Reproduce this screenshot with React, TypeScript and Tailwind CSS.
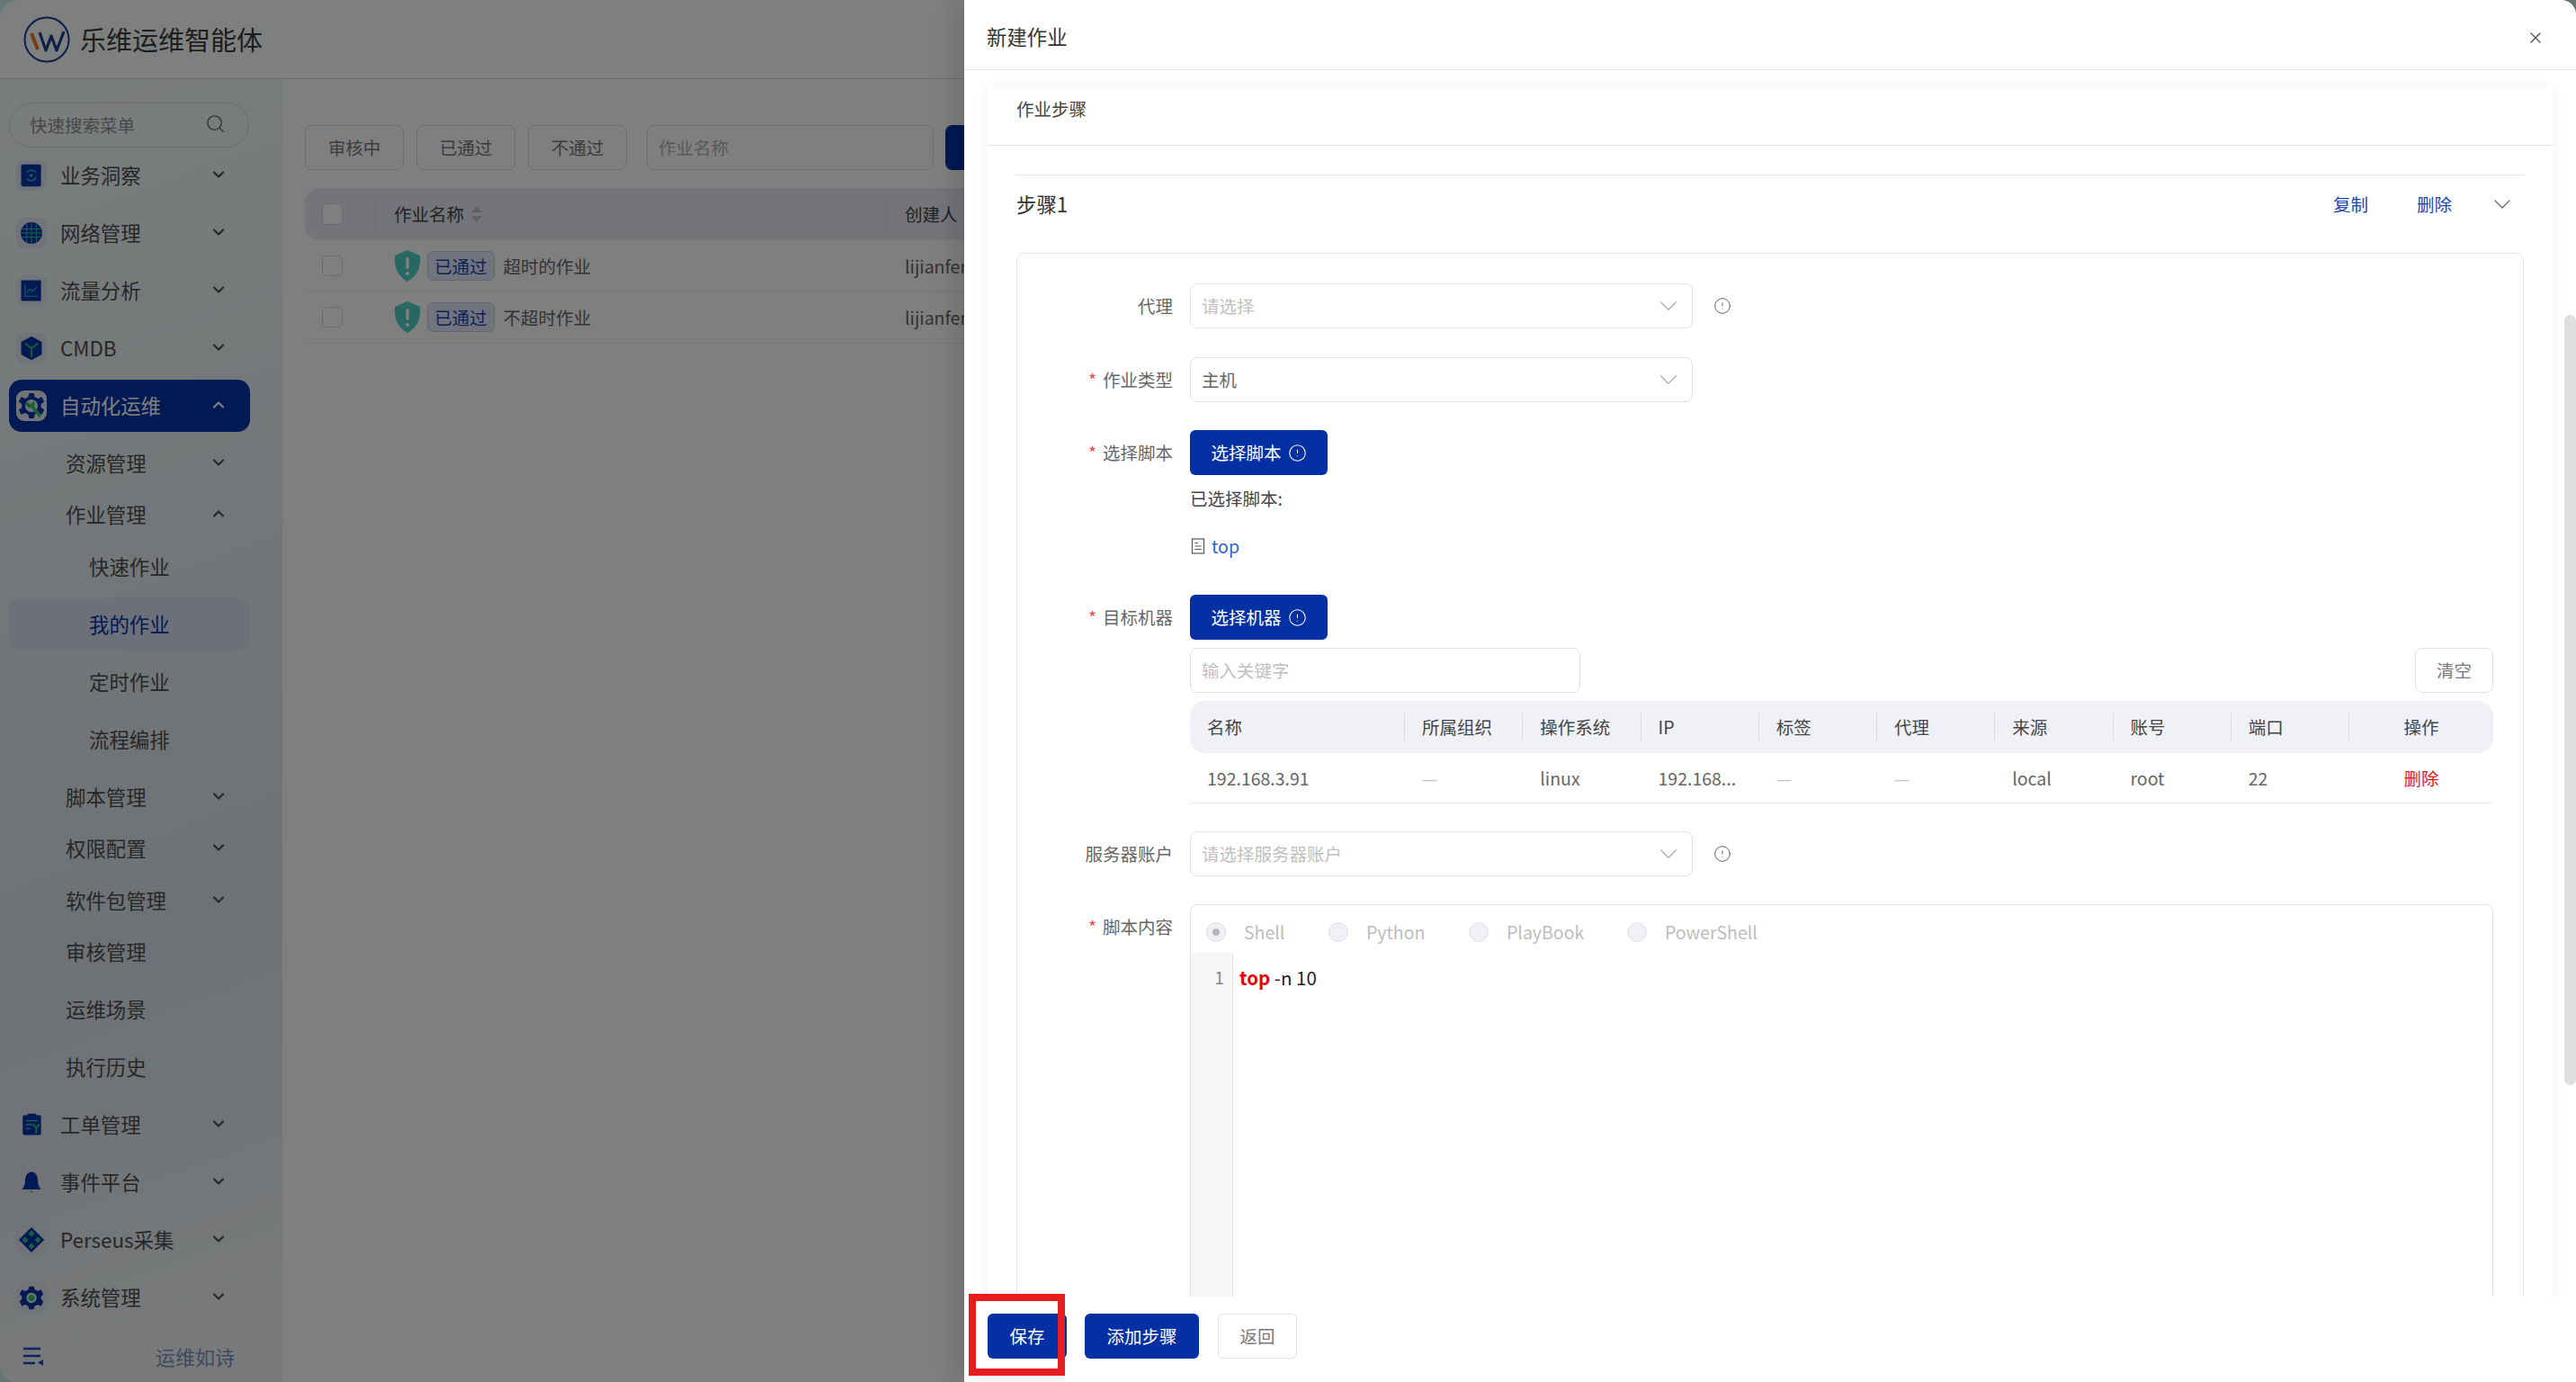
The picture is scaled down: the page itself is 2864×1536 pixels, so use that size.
import { ChevronDown, ChevronUp, CircleAlert, Search, X } from 'lucide-react';

const font = { fontFamily: '"Noto Sans CJK SC", "Noto Sans", sans-serif' };

function Logo() {
  return (
    <svg width="52" height="52" viewBox="0 0 52 52" fill="none">
      <circle cx="26" cy="26" r="24.5" stroke="#1c3f94" strokeWidth="2" />
      <path d="M9 19L16 37" stroke="#e8792a" strokeWidth="4" />
      <path d="M18 18L25 38L31 22L37 38L45 17" stroke="#1c3f94" strokeWidth="3.2" fill="none" strokeLinejoin="round" />
    </svg>
  );
}

const navy = '#0334a8';
const green = '#2fc26a';

function MenuIcon({ name }: { name: string }) {
  const g = (() => {
    switch (name) {
      case 'insight':
        return (
          <>
            <rect x="4" y="3" width="25" height="28" rx="2" fill={navy} />
            <path d="M11 13 A7 7 0 0 1 22 13 M23 19 A7 7 0 0 1 11 21" stroke="#35c0b5" strokeWidth="1.6" fill="none" />
            <circle cx="16.5" cy="17" r="2" fill="#35c0b5" />
          </>
        );
      case 'globe':
        return (
          <>
            <circle cx="17" cy="17" r="13.5" fill={navy} />
            <path d="M3.5 12H30.5M3.5 17H30.5M3.5 22H30.5M11 5V29M17 3.5V30.5M23 5V29" stroke="#2fc2a0" strokeWidth="1.2" />
          </>
        );
      case 'chart':
        return (
          <>
            <rect x="4" y="4" width="25" height="26" rx="1" fill={navy} />
            <path d="M9 9V24H25" stroke="#35c0b5" strokeWidth="1.2" fill="none" />
            <path d="M11 20L15 15L18 18L24 12" stroke="#35c0b5" strokeWidth="1.2" fill="none" />
          </>
        );
      case 'box':
        return (
          <>
            <path d="M17 2L30 9V25L17 32L4 25V9Z" fill={navy} />
            <path d="M9 11L17 17L25 11M17 17V28" stroke={green} strokeWidth="2" fill="none" />
          </>
        );
      case 'gear':
        return (
          <>
            <path d="M14 1H20L21 6L25 8L30 6L33 12L29 15V19L33 22L30 28L25 26L21 28L20 33H14L13 28L9 26L4 28L1 22L5 19V15L1 12L4 6L9 8L13 6Z" fill={navy} />
            <circle cx="17" cy="17" r="8" fill="#dfe4ee" />
            <path d="M18 18L27 29" stroke={green} strokeWidth="4" strokeLinecap="round" />
            <path d="M11 11A5.5 5.5 0 1 0 20 11L16 15L13 13Z" fill={green} />
          </>
        );
      case 'ticket':
        return (
          <>
            <rect x="6" y="5" width="23" height="25" rx="2" fill={navy} />
            <rect x="12" y="3" width="11" height="4" rx="1" fill={navy} />
            <path d="M10 12H25M10 17H18M10 22H16" stroke="#2fc2a0" strokeWidth="1.5" />
            <path d="M20 16V18L23 21V28M26 16V18L23 21" stroke={green} strokeWidth="2.2" fill="none" />
          </>
        );
      case 'bell':
        return (
          <>
            <path d="M17 4C11 4 9 10 9 15C9 20 7 24 5 26H29C27 24 25 20 25 15C25 10 23 4 17 4Z" fill={navy} />
            <path d="M15 28H19L17 31Z" fill={green} />
          </>
        );
      case 'diamond':
        return (
          <>
            <path d="M17 1L33 17L17 33L1 17Z" fill={navy} />
            <path d="M17 5L21 9L17 13L13 9Z M9 13L13 17L9 21L5 17Z M25 13L29 17L25 21L21 17Z M17 21L21 25L17 29L13 25Z" fill="#2fc28a" />
          </>
        );
      default:
        return (
          <>
            <path d="M14 3H20L21 7L25 9L29 7L32 13L29 16V19L32 22L29 28L25 26L21 28L20 32H14L13 28L9 26L5 28L2 22L5 19V16L2 13L5 7L9 9L13 7Z" fill={navy} />
            <circle cx="17" cy="17.5" r="6.5" fill="#e2e6ef" />
            <circle cx="17" cy="17.5" r="4" fill={green} />
          </>
        );
    }
  })();
  return (
    <span className="flex h-[34px] w-[34px] shrink-0 items-center justify-center rounded-[9px] bg-[#e2e6f0]">
      <svg width="30" height="30" viewBox="0 0 34 34">{g}</svg>
    </span>
  );
}

type Item = { label: string; icon?: string; level: 0 | 1 | 2; arrow?: 'up' | 'down'; tight?: boolean; active?: boolean; current?: boolean };

const menu: Item[] = [
  { label: '业务洞察', icon: 'insight', level: 0, arrow: 'down' },
  { label: '网络管理', icon: 'globe', level: 0, arrow: 'down' },
  { label: '流量分析', icon: 'chart', level: 0, arrow: 'down' },
  { label: 'CMDB', icon: 'box', level: 0, arrow: 'down' },
  { label: '自动化运维', icon: 'gear', level: 0, arrow: 'up', active: true },
  { label: '资源管理', level: 1, arrow: 'down' },
  { label: '作业管理', level: 1, arrow: 'up', tight: true },
  { label: '快速作业', level: 2, tight: true },
  { label: '我的作业', level: 2, current: true },
  { label: '定时作业', level: 2 },
  { label: '流程编排', level: 2 },
  { label: '脚本管理', level: 1, arrow: 'down' },
  { label: '权限配置', level: 1, arrow: 'down', tight: true },
  { label: '软件包管理', level: 1, arrow: 'down', tight: true },
  { label: '审核管理', level: 1, tight: true },
  { label: '运维场景', level: 1 },
  { label: '执行历史', level: 1 },
  { label: '工单管理', icon: 'ticket', level: 0, arrow: 'down' },
  { label: '事件平台', icon: 'bell', level: 0, arrow: 'down' },
  { label: 'Perseus采集', icon: 'diamond', level: 0, arrow: 'down' },
  { label: '系统管理', icon: 'cog', level: 0, arrow: 'down' },
];

function MenuRow({ item, first }: { item: Item; first: boolean }) {
  return (
    <div
      className={`flex h-[57.5px] items-center rounded-[14px] text-[22.4px] ${first || item.tight ? '' : 'mt-[6.5px]'} ${
        item.active ? 'bg-[#0334a8] text-white' : item.current ? 'bg-[#d9e1f3] text-[#0334a8]' : 'text-[#4d4f50]'
      } ${item.level === 0 ? 'pl-[8px]' : item.level === 1 ? 'pl-[63px]' : 'pl-[89px]'}`}
    >
      {item.icon && <MenuIcon name={item.icon} />}
      <span className={item.icon ? 'ml-[15px]' : ''}>{item.label}</span>
      {item.arrow === 'down' && <ChevronDown size={20} strokeWidth={2.6} className="ml-auto mr-[25px] -translate-y-[1px]" />}
      {item.arrow === 'up' && <ChevronUp size={20} strokeWidth={2.6} className="ml-auto mr-[25px] -translate-y-[1px]" />}
    </div>
  );
}

function Sidebar() {
  return (
    <aside className="flex h-full w-[314px] shrink-0 flex-col bg-[linear-gradient(160deg,#f6fbfb_0%,#e6edf1_40%,#dce4ec_66%,#f3f6f7_100%)]">
      <div className="ml-[10px] mt-[26px] flex h-[50px] w-[267px] items-center rounded-full border border-[#d4d8da] pl-[22px] pr-[25px] text-[19.5px] text-[#8c9092]">
        <span>快速搜索菜单</span>
        <Search size={23} strokeWidth={1.5} className="ml-auto -translate-y-[2px] text-[#6b6f72]" />
      </div>
      <nav className="ml-[10px] mt-[2px] w-[268px]">
        {menu.map((item, i) => (
          <MenuRow key={item.label} item={item} first={i === 0} />
        ))}
      </nav>
      <div className="mt-auto flex h-[58px] items-center pl-[26px]">
        <svg width="22" height="21" viewBox="0 0 22 21" fill="none">
          <path d="M0 2H19M0 10H19M0 18H13" stroke="#1c4bb8" strokeWidth="2.4" />
          <path d="M22 14V21L16 17.5Z" fill="#1c4bb8" />
        </svg>
        <span className="ml-[125px] text-[22px] text-[#7d93c4]">运维如诗</span>
      </div>
    </aside>
  );
}

function Shield() {
  return (
    <svg width="30" height="35" viewBox="0 0 30 35">
      <path d="M15 0L29 6C30 18 27 28 15 35C3 28 0 18 1 6Z" fill="#4fd0c4" />
      <rect x="13.3" y="8" width="3.4" height="13" rx="1.7" fill="#fff" />
      <circle cx="15" cy="26" r="2.1" fill="#fff" />
    </svg>
  );
}

function JobRow({ name }: { name: string }) {
  return (
    <div className="flex h-[57.5px] items-center border-b border-[#ececec]">
      <div className="flex w-[99px] shrink-0 pl-[19px]">
        <span className="h-[23px] w-[23px] rounded-[5px] border border-[#d9d9d9] bg-white" />
      </div>
      <div className="flex w-[568px] shrink-0 items-center text-[19.5px] text-[#666]">
        <Shield />
        <span className="ml-[7px] rounded-[6px] border border-[#c3cef0] bg-[#e3e8fa] px-[7px] py-[1px] text-[#1a46b0]">已通过</span>
        <span className="ml-[10px]">{name}</span>
      </div>
      <span className="text-[19.5px] text-[#666]">lijianfeng</span>
    </div>
  );
}

function MainPanel() {
  return (
    <main className="ml-0 mt-[25px] h-[1395px] flex-1 rounded-[28px] bg-white pl-[25px] pt-[26px]">
      <div className="flex items-center text-[19.5px] text-[#777]">
        {['审核中', '已通过', '不通过'].map((t) => (
          <span key={t} className="mr-[14px] flex h-[50px] w-[110px] items-center justify-center rounded-[8px] border border-[#dcdcdc]">
            {t}
          </span>
        ))}
        <span className="ml-[8px] flex h-[50px] w-[319px] items-center rounded-[8px] border border-[#dcdcdc] pl-[12px] text-[#b3b3b3]">作业名称</span>
        <span className="ml-[13px] h-[50px] w-[120px] rounded-[8px] bg-[#0334a8]" />
      </div>
      <div className="mt-[20px] flex h-[58px] items-center rounded-[16px] bg-[#e6eaf6] text-[19.5px] text-[#444]">
        <div className="flex w-[79px] shrink-0 items-center justify-between">
          <span className="ml-[19px] h-[24px] w-[23px] rounded-[5px] border border-[#d9d9d9] bg-white" />
          <span className="h-[32px] w-px bg-[#d5d9e4]" />
        </div>
        <div className="flex w-[568px] shrink-0 items-center justify-between">
          <span className="ml-[20px] flex items-center">
            作业名称
            <svg className="ml-[8px]" width="12" height="20" viewBox="0 0 12 20">
              <path d="M6 1L12 8H0Z M6 19L0 12H12Z" fill="#c2c2c2" />
            </svg>
          </span>
          <span className="h-[32px] w-px bg-[#d5d9e4]" />
        </div>
        <span className="ml-[20px]">创建人</span>
      </div>
      <JobRow name="超时的作业" />
      <JobRow name="不超时作业" />
    </main>
  );
}

function Field({ label, required, className, children }: { label: string; required?: boolean; className?: string; children: React.ReactNode }) {
  return (
    <div className={`flex items-start ${className ?? ''}`}>
      <div className="flex h-[50px] w-[173px] shrink-0 items-center justify-end text-[19.5px] text-[#666]">
        {required && <span className="mr-[7px] text-[#ef4d4d]">*</span>}
        {label}
      </div>
      <div className="ml-[19px] min-w-0 flex-1">{children}</div>
    </div>
  );
}

function SelectBox({ text, placeholder }: { text: string; placeholder?: boolean }) {
  return (
    <div className="flex items-center">
      <div className={`flex h-[50px] w-[559px] items-center rounded-[8px] border border-[#e1e1e1] pl-[12px] pr-[9px] text-[19.5px] ${placeholder ? 'text-[#bfbfbf]' : 'text-[#666]'}`}>
        {text}
        <ChevronDown size={34} strokeWidth={0.8} className="ml-auto text-[#a9a9a9]" />
      </div>
    </div>
  );
}

function Tip() {
  return <CircleAlert size={20} strokeWidth={1.2} className="ml-[23px] text-[#666]" />;
}

function PrimaryButton({ text }: { text: string }) {
  return (
    <button className="flex h-[50px] w-[153px] items-center justify-center rounded-[6px] bg-[#0330a3] text-[19.5px] text-white">
      {text}
      <CircleAlert size={21} strokeWidth={1.2} className="ml-[7px]" />
    </button>
  );
}

const hostCols = [
  { head: '名称', cell: '192.168.3.91' },
  { head: '所属组织', cell: '—' },
  { head: '操作系统', cell: 'linux' },
  { head: 'IP', cell: '192.168...' },
  { head: '标签', cell: '—' },
  { head: '代理', cell: '—' },
  { head: '来源', cell: 'local' },
  { head: '账号', cell: 'root' },
  { head: '端口', cell: '22' },
];

function HostTable() {
  return (
    <div className="mt-[9px] text-[19.5px]">
      <div className="grid h-[58px] grid-cols-[239px_repeat(8,131.25px)_1fr] items-center rounded-[16px] bg-[#f0f1f7] text-[#444]">
        {hostCols.map((c) => (
          <div key={c.head} className="flex h-[30px] items-center border-r border-[#d9dbe1] pl-[19px]">
            {c.head}
          </div>
        ))}
        <div className="text-center">操作</div>
      </div>
      <div className="grid h-[56px] grid-cols-[239px_repeat(8,131.25px)_1fr] items-center border-b border-[#ececec] text-[#666]">
        {hostCols.map((c) => (
          <div key={c.head} className={`pl-[19px] ${c.cell === '—' ? 'text-[#c4c4c4]' : ''}`}>
            {c.cell}
          </div>
        ))}
        <div className="text-center text-[#e8141c]">删除</div>
      </div>
    </div>
  );
}

const radios = [
  { label: 'Shell', w: 'w-[136px]' },
  { label: 'Python', w: 'w-[156px]' },
  { label: 'PlayBook', w: 'w-[176px]' },
  { label: 'PowerShell', w: 'w-[180px]' },
];

function Editor() {
  return (
    <div className="h-[500px] rounded-t-[8px] border border-[#e1e1e1]">
      <div className="flex h-[53px] items-center pl-[17px] pt-[6px] text-[19.5px] text-[#bdbdbd]">
        {radios.map((r, i) => (
          <span key={r.label} className={`flex items-center ${r.w}`}>
            <span className="flex h-[22px] w-[22px] items-center justify-center rounded-full border border-[#dfe1e8] bg-[#f0f1f6]">
              {i === 0 && <span className="h-[8px] w-[8px] rounded-full bg-[#b5b7bc]" />}
            </span>
            <span className="ml-[20px]">{r.label}</span>
          </span>
        ))}
      </div>
      <div className="flex h-[444px] text-[19.5px]">
        <div className="w-[47px] shrink-0 border-r border-[#e1e1e1] bg-[#f6f6f6] pr-[9px] pt-[12px] text-right leading-[30px] text-[#888]">1</div>
        <div className="pl-[7px] pt-[12px] text-[20.5px] leading-[30px] text-[#222]">
          <span className="font-bold text-[#e8000d]">top</span> -n 10
        </div>
      </div>
    </div>
  );
}

function StepForm() {
  return (
    <div className="mt-[23px] h-[1200px] rounded-t-[8px] border border-[#e4e4e4] pr-[33px] pt-[33px]">
      <Field label="代理">
        <div className="flex items-center">
          <SelectBox text="请选择" placeholder />
          <Tip />
        </div>
      </Field>
      <Field label="作业类型" required className="mt-[32px]">
        <SelectBox text="主机" />
      </Field>
      <Field label="选择脚本" required className="mt-[31px]">
        <PrimaryButton text="选择脚本" />
        <div className="mt-[11px] text-[19.5px] leading-[30px] text-[#444]">已选择脚本:</div>
        <div className="mt-[23px] flex items-center text-[19.5px] leading-[30px] text-[#2e62d9]">
          <svg width="16" height="18" viewBox="0 0 16 18" fill="none" className="ml-[1px]">
            <rect x="1.5" y="1" width="13" height="16" stroke="#555" strokeWidth="1.2" />
            <path d="M4.5 5.5H8M4.5 9H11.5M4.5 12.5H11.5" stroke="#555" strokeWidth="1.2" />
          </svg>
          <span className="ml-[7px]">top</span>
        </div>
      </Field>
      <Field label="目标机器" required className="mt-[39px]">
        <PrimaryButton text="选择机器" />
        <div className="mt-[9px] flex justify-between text-[19.5px]">
          <div className="flex h-[50px] w-[434px] items-center rounded-[8px] border border-[#e1e1e1] pl-[12px] text-[#bfbfbf]">输入关键字</div>
          <div className="flex h-[50px] w-[87px] items-center justify-center rounded-[8px] border border-[#e1e1e1] text-[#777]">清空</div>
        </div>
        <HostTable />
      </Field>
      <Field label="服务器账户" className="mt-[31px]">
        <div className="flex items-center">
          <SelectBox text="请选择服务器账户" placeholder />
          <Tip />
        </div>
      </Field>
      <Field label="脚本内容" required className="mt-[31px]">
        <Editor />
      </Field>
    </div>
  );
}

function Drawer() {
  return (
    <div className="absolute inset-y-0 left-[1072px] right-0 flex flex-col rounded-tr-[16px] bg-white shadow-[-12px_0_24px_rgba(0,0,0,0.12)]">
      <div className="flex h-[78px] shrink-0 items-center justify-between border-b border-[#e6e6e6] pl-[25px] pr-[35px] text-[22.4px] text-[#333]">
        <span className="translate-y-[2px]">新建作业</span>
        <X size={20} strokeWidth={1.6} className="translate-y-[3px] text-[#555]" />
      </div>
      <div className="relative min-h-0 flex-1 overflow-hidden pl-[26px] pr-[26px] pt-[19px]">
        <div className="h-[1400px] bg-white shadow-[0_0_14px_rgba(40,60,110,0.08)]">
          <div className="h-[65px] border-b border-[#e4e4e4] pl-[32px] pt-[8px] text-[19.5px] leading-[32px] text-[#444]">作业步骤</div>
          <div className="px-[32px]">
            <div className="mt-[32px] flex h-[64px] items-center border-t border-[#e4e4e4] text-[19.5px]">
              <span className="text-[22.4px] text-[#333]">步骤1</span>
              <span className="ml-auto text-[#1a46b0]">复制</span>
              <span className="ml-[54px] text-[#1a46b0]">删除</span>
              <ChevronDown size={32} strokeWidth={0.9} className="ml-[40px] mr-[8px] text-[#666]" />
            </div>
            <StepForm />
          </div>
        </div>
        <div className="absolute right-0 top-[272px] h-[856px] w-[13px] rounded-full bg-[#dcdee0]" />
      </div>
      <div className="flex h-[95px] shrink-0 items-center bg-white pb-[7px] pl-[26px] text-[19.5px]">
        <button className="h-[50px] w-[88px] rounded-[6px] bg-[#0330a3] text-white">保存</button>
        <button className="ml-[20px] h-[50px] w-[127px] rounded-[6px] bg-[#0330a3] text-white">添加步骤</button>
        <button className="ml-[21px] h-[50px] w-[88px] rounded-[6px] border border-[#e1e1e1] text-[#777]">返回</button>
      </div>
    </div>
  );
}

export default function App() {
  return (
    <div style={font} className="relative h-[1536px] w-[2864px] overflow-hidden bg-[#c9ecec]">
      <div className="flex h-full flex-col overflow-hidden rounded-[20px] bg-[#fcfefe]">
        <header className="flex h-[88px] shrink-0 items-center border-b border-[#dadcdd] pl-[26px]">
          <Logo />
          <span className="ml-[11px] text-[29px] text-[#3d3d3d]">乐维运维智能体</span>
        </header>
        <div className="flex min-h-0 flex-1">
          <Sidebar />
          <MainPanel />
        </div>
      </div>
      {/* mask under the drawer */}
      <div className="absolute inset-0 bg-black/50" />
      <Drawer />
      {/* annotation box from the screenshot */}
      <div className="absolute left-[1077px] top-[1438px] h-[91px] w-[107px] border-[8px] border-[#e71c1c]" />
    </div>
  );
}
